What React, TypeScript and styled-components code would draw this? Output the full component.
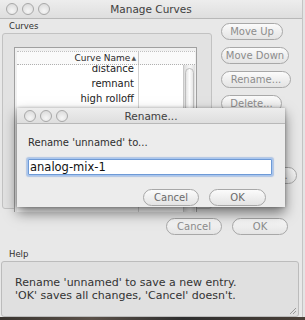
import React from "react";
import styled, { createGlobalStyle } from "styled-components";

const Global = createGlobalStyle`
  html, body { margin: 0; padding: 0; background: #e4e4e4; }
  body { font-family: "DejaVu Sans", "Liberation Sans", sans-serif; }
`;

const Screen = styled.div`
  position: relative;
  width: 305px;
  height: 320px;
  overflow: hidden;
  display: flex;
  flex-direction: column;
  background: #e4e4e4;
`;

const Window = styled.div`
  width: 302px;
  height: 317px;
  border-right: 1px solid #c4c4c4;
  background: #e8e8e8;
  display: flex;
  flex-direction: column;
  overflow: hidden;
`;

const Desktop = styled.div`
  height: 3px;
  background: linear-gradient(90deg, #3a3530 0%, #5a5048 30%, #2e2e2e 60%, #4a4038 100%);
`;

const TitleBar = styled.div<{ $h: number }>`
  position: relative;
  height: ${(p) => p.$h}px;
  flex: none;
  display: flex;
  align-items: center;
  justify-content: center;
  background: linear-gradient(#ededed, #dedede);
  border-bottom: 1px solid #b8b8b8;
  box-sizing: border-box;
`;

const Lights = styled.div<{ $left: number }>`
  position: absolute;
  left: ${(p) => p.$left}px;
  top: 0;
  bottom: 0;
  display: flex;
  align-items: center;
  gap: 4px;
`;

const Light = styled.span`
  width: 12px;
  height: 12px;
  border-radius: 50%;
  box-sizing: border-box;
  border: 1px solid #a8a8a8;
  background: radial-gradient(circle at 50% 70%, #f6f6f6, #d6d6d6);
`;

const Title = styled.span`
  font-size: 10.5px;
  color: #404040;
`;

const Content = styled.div`
  flex: 1;
  display: flex;
  flex-direction: column;
`;

const TopArea = styled.div`
  display: grid;
  grid-template-columns: 219px 1fr;
`;

const LeftCol = styled.div`
  display: flex;
  flex-direction: column;
`;

const SmallLabel = styled.div<{ $h: number; $bottom?: boolean }>`
  font-size: 8.5px;
  color: #303030;
  padding-left: 9px;
  height: ${(p) => p.$h}px;
  box-sizing: border-box;
  display: flex;
  align-items: ${(p) => (p.$bottom ? "flex-end" : "center")};
  padding-bottom: ${(p) => (p.$bottom ? 2 : 0)}px;
`;

const GroupBox = styled.div`
  margin-left: 2px;
  width: 210px;
  height: 176px;
  box-sizing: border-box;
  border: 1px solid #c2c2c2;
  border-radius: 3px;
  background: #e2e2e2;
  padding: 13px 14px 0 11px;
`;

const TableFrame = styled.div`
  height: 100%;
  border: 1px solid #a0a0a0;
  border-bottom: none;
  padding: 3px 1px 0 2px;
  background: #f0f0f0;
  display: flex;
  flex-direction: column;
`;

const Header = styled.div`
  height: 12px;
  display: grid;
  grid-template-columns: 122px 1fr;
  background: #fafafa;
  border-top: 1px dotted #c0c0c0;
  border-bottom: 1px dotted #b0b0b0;
  font-size: 9px;
  color: #2a2a2a;
`;

const HeaderCell = styled.div<{ $sep?: boolean }>`
  display: flex;
  align-items: center;
  justify-content: flex-end;
  padding-right: 2px;
  border-right: ${(p) => (p.$sep ? "1px solid #c8c8c8" : "none")};
  line-height: 12px;
`;

const Arrow = styled.span`
  font-size: 6px;
  color: #555;
  margin-left: 1px;
`;

const TableBody = styled.div`
  flex: 1;
  display: grid;
  grid-template-columns: 122px 44px 1fr;
  background: #ffffff;
  overflow: hidden;
`;

const NameCol = styled.div`
  border-right: 1px solid #d4d4d4;
  display: flex;
  flex-direction: column;
  margin-top: -4px;
`;

const Row = styled.div`
  height: 15px;
  display: flex;
  align-items: center;
  justify-content: flex-end;
  padding-right: 4px;
  font-size: 10px;
  color: #222;
`;

const EmptyCol = styled.div``;

const ScrollTrack = styled.div`
  background: linear-gradient(90deg, #dcdcdc, #f2f2f2 40%, #f6f6f6 60%, #dedede);
  border-left: 1px solid #c8c8c8;
  padding: 3px 1px 0 1px;
`;

const Thumb = styled.div`
  height: 120px;
  border-radius: 6px 6px 0 0;
  border: 1px solid #bdbdbd;
  background: linear-gradient(90deg, #e4e4e4, #fdfdfd 50%, #e6e6e6);
`;

const RightCol = styled.div`
  display: flex;
  flex-direction: column;
  gap: 7px;
  padding-top: 4px;
  padding-left: 2px;
  align-items: flex-start;
`;

const Pill = styled.button<{ $w: number; $tone?: "dim" | "mid"; $skip?: number }>`
  width: ${(p) => p.$w}px;
  height: 17px;
  margin-top: ${(p) => (p.$skip ? p.$skip * 24 : 0)}px;
  box-sizing: border-box;
  border: 1px solid #a8a8a8;
  border-radius: 9px;
  background: linear-gradient(#fbfbfb, #ededed 60%, #e4e4e4);
  font-family: "DejaVu Sans", "Liberation Sans", sans-serif;
  font-size: 10px;
  color: ${(p) => (p.$tone === "mid" ? "#6a6a6a" : "#8c8c8c")};
  padding: 0;
  display: flex;
  align-items: center;
  justify-content: center;
  line-height: 1;
`;

const BottomButtons = styled.div`
  display: flex;
  justify-content: flex-end;
  gap: 10px;
  padding-right: 14px;
  margin-top: 9px;
`;

const HelpBox = styled.div`
  margin-left: 1px;
  width: 298px;
  height: 56px;
  box-sizing: border-box;
  border: 1px solid #bcbcbc;
  border-radius: 3px;
  background: #e0e0e0;
  padding: 14px 0 0 13px;
  font-size: 11px;
  line-height: 13px;
  color: #333;
  position: relative;
`;

const Grip = styled.svg`
  position: absolute;
  right: 1px;
  bottom: 1px;
`;

const Dialog = styled.div`
  position: absolute;
  left: 17px;
  top: 108px;
  width: 268px;
  height: 99px;
  background: #ececec;
  box-shadow: 0 6px 12px rgba(0, 0, 0, 0.5), 0 0 3px rgba(0, 0, 0, 0.3);
  display: flex;
  flex-direction: column;
`;

const DialogBody = styled.div`
  flex: 1;
  padding: 11px 13px 0 11px;
  display: flex;
  flex-direction: column;
`;

const Prompt = styled.div`
  font-size: 10px;
  color: #2e2e2e;
  height: 14px;
  display: flex;
  align-items: center;
`;

const Input = styled.div`
  margin-top: 10px;
  height: 16px;
  box-sizing: border-box;
  border: 1px solid #6e9ad6;
  box-shadow: 0 0 0 1px #a9c6ee, 0 0 1px 2px rgba(120, 160, 220, 0.5);
  background: #fff;
  font-size: 11.5px;
  color: #111;
  padding-left: 1px;
  display: flex;
  align-items: center;
  border-radius: 1px;
`;

const DialogButtons = styled.div`
  margin-top: 14px;
  display: flex;
  justify-content: flex-end;
  gap: 10px;
  padding-right: 6px;
`;

export default function App() {
  return (
    <Screen>
      <Global />
      <Window>
        <TitleBar $h={19}>
          <Lights $left={6}>
            <Light />
            <Light />
            <Light />
          </Lights>
          <Title>Manage Curves</Title>
        </TitleBar>
        <Content>
          <TopArea>
            <LeftCol>
              <SmallLabel $h={14}>Curves</SmallLabel>
              <GroupBox>
                <TableFrame>
                  <Header>
                    <HeaderCell $sep>
                      Curve Name<Arrow>▲</Arrow>
                    </HeaderCell>
                    <HeaderCell />
                  </Header>
                  <TableBody>
                    <NameCol>
                      <Row>distance</Row>
                      <Row>remnant</Row>
                      <Row>high rolloff</Row>
                    </NameCol>
                    <EmptyCol />
                    <ScrollTrack>
                      <Thumb />
                    </ScrollTrack>
                  </TableBody>
                </TableFrame>
              </GroupBox>
            </LeftCol>
            <RightCol>
              <Pill $w={62}>Move Up</Pill>
              <Pill $w={68}>Move Down</Pill>
              <Pill $w={70}>Rename...</Pill>
              <Pill $w={61}>Delete...</Pill>
              <Pill $w={76} $skip={2}>Duplicate...</Pill>
            </RightCol>
          </TopArea>
          <BottomButtons>
            <Pill $w={56}>Cancel</Pill>
            <Pill $w={56}>OK</Pill>
          </BottomButtons>
          <SmallLabel $h={26} $bottom>
            Help
          </SmallLabel>
          <HelpBox>
            Rename 'unnamed' to save a new entry.
            <br />
            'OK' saves all changes, 'Cancel' doesn't.
            <Grip width="8" height="8" viewBox="0 0 8 8">
              <path d="M7 1L1 7M7 4L4 7" stroke="#9a9a9a" strokeWidth="1" />
            </Grip>
          </HelpBox>
        </Content>
      </Window>
      <Desktop />
      <Dialog>
        <TitleBar $h={16}>
          <Lights $left={7}>
            <Light />
            <Light />
            <Light />
          </Lights>
          <Title>Rename...</Title>
        </TitleBar>
        <DialogBody>
          <Prompt>Rename 'unnamed' to...</Prompt>
          <Input>analog-mix-1</Input>
          <DialogButtons>
            <Pill $w={56} $tone="mid">Cancel</Pill>
            <Pill $w={57} $tone="mid">OK</Pill>
          </DialogButtons>
        </DialogBody>
      </Dialog>
    </Screen>
  );
}
